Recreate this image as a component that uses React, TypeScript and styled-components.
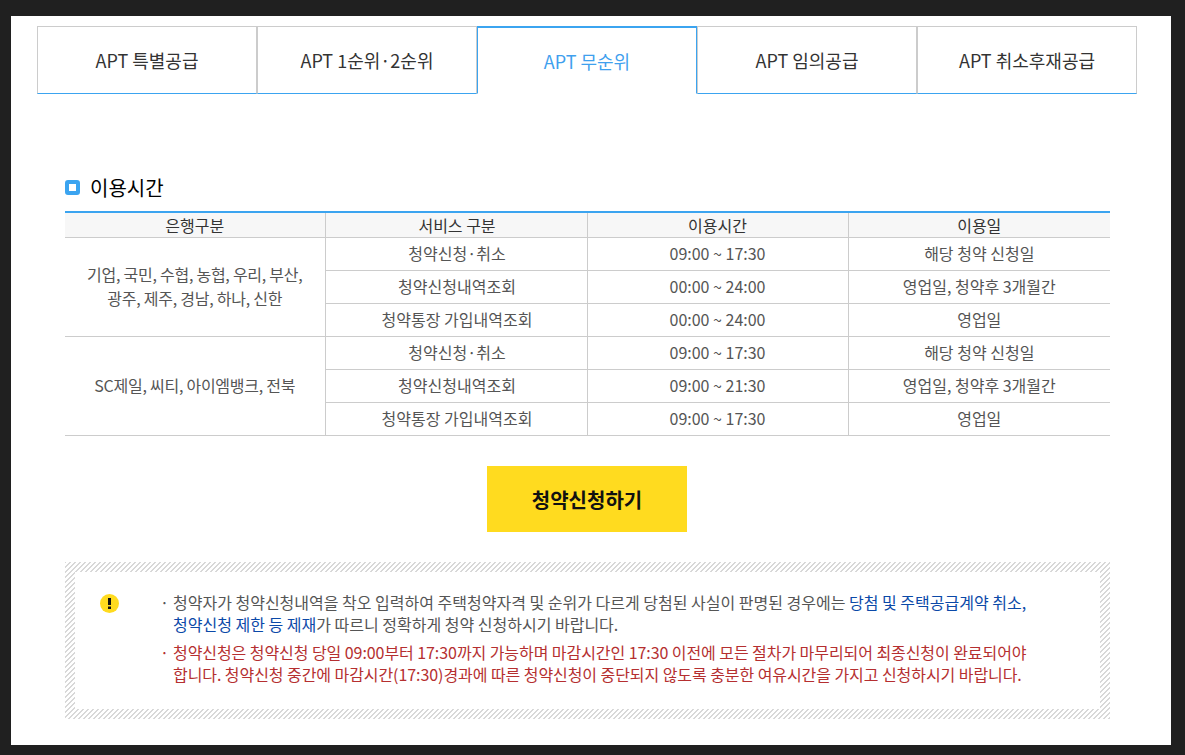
import React from "react";
import styled, { createGlobalStyle } from "styled-components";

const GlobalStyle = createGlobalStyle`
  html, body {
    margin: 0;
    padding: 0;
    background: #202020;
  }
  body {
    font-family: "Noto Sans CJK KR", "Noto Sans", sans-serif;
    color: #333;
  }
`;

const Frame = styled.div`
  width: 1185px;
  height: 755px;
  box-sizing: border-box;
  padding: 16px 14px 10px 11px;
  overflow: hidden;
`;

const Panel = styled.main`
  height: 100%;
  box-sizing: border-box;
  background: #fff;
  padding: 10px 34px 0 26px;
`;

const Tabs = styled.ul`
  display: flex;
  list-style: none;
  margin: 0;
  padding: 0;
`;

const Tab = styled.li<{ $active?: boolean }>`
  width: 220px;
  height: 68px;
  box-sizing: border-box;
  display: flex;
  align-items: center;
  justify-content: center;
  font-size: 18px;
  background: #fff;
  color: ${(p) => (p.$active ? "#3fa0ee" : "#333")};
  border: 1px solid #ccc;
  border-left-color: ${(p) => (p.$active ? "#3ba4f0" : "#ccc")};
  border-right-color: ${(p) => (p.$active ? "#3ba4f0" : "#ccc")};
  border-top: ${(p) => (p.$active ? "2px solid #3ba4f0" : "1px solid #ccc")};
  border-bottom: ${(p) => (p.$active ? "1px solid #fff" : "1px solid #3ba4f0")};
`;

const Content = styled.section`
  padding: 80px 27px 0 28px;
`;

const TitleRow = styled.h2`
  display: flex;
  align-items: center;
  gap: 10px;
  margin: 0 0 11px;
  height: 26px;
  font-size: 20px;
  font-weight: 400;
  color: #000;
`;

const TitleMark = styled.span`
  width: 15px;
  height: 15px;
  box-sizing: border-box;
  border: 4px solid #3ba4f0;
  border-radius: 3px;
  background: #fff;
`;

const Table = styled.table`
  width: 1045px;
  border-collapse: collapse;
  table-layout: fixed;
  border-top: 2px solid #3ba4f0;
  font-size: 16px;
`;

const HeadCell = styled.th`
  height: 24px;
  padding: 0;
  font-size: 16px;
  font-weight: 400;
  color: #333;
  background: #f7f7f7;
  border-bottom: 1px solid #ccc;
  border-left: 1px solid #ccc;
  &:first-child {
    border-left: 0;
  }
  &:nth-last-child(3) {
    padding-left: 2px;
  }
`;

const Cell = styled.td`
  height: 30px;
  padding: 0 0 2px;
  text-align: center;
  line-height: 24px;
  color: #555;
  border-bottom: 1px solid #ccc;
  border-left: 1px solid #ccc;
  &:nth-last-child(3) {
    padding-left: 2px;
  }
`;

const BankCell = styled(Cell)`
  border-left: 0;
  letter-spacing: -0.25px;
`;

const ApplyButton = styled.button`
  display: block;
  width: 200px;
  height: 66px;
  margin: 30px 0 30px 422px;
  border: 0;
  padding: 0;
  background: #ffdb1f;
  color: #111;
  font-family: inherit;
  font-size: 20px;
  font-weight: 700;
`;

const Notice = styled.aside`
  display: flex;
  width: 1045px;
  height: 157px;
  box-sizing: border-box;
  padding: 10px;
  background: repeating-linear-gradient(
    135deg,
    #d8d8d8 0,
    #d8d8d8 1px,
    #fff 1px,
    #fff 3.5355px
  );
`;

const NoticeInner = styled.div`
  flex: 1;
  display: flex;
  background: #fff;
  padding: 19px 25px 0 25px;
`;

const WarnIcon = styled.svg`
  flex: none;
  width: 19px;
  height: 19px;
  margin-top: 3px;
  margin-right: 43px;
`;

const NoticeList = styled.ul`
  list-style: none;
  margin: 0;
  padding: 0;
  font-size: 16px;
  line-height: 22px;
  white-space: nowrap;
`;

const NoticeItem = styled.li<{ $red?: boolean }>`
  position: relative;
  padding-left: 11px;
  margin-bottom: 6px;
  color: ${(p) => (p.$red ? "#b52f30" : "#555")};
  letter-spacing: ${(p) => (p.$red ? "-0.065px" : "0")};
  &::before {
    content: "·";
    position: absolute;
    left: -2px;
    top: 0;
  }
`;

const Strong = styled.span`
  color: #0b49a8;
`;

const rows = [
  ["청약신청·취소", "09:00 ~ 17:30", "해당 청약 신청일"],
  ["청약신청내역조회", "00:00 ~ 24:00", "영업일, 청약후 3개월간"],
  ["청약통장 가입내역조회", "00:00 ~ 24:00", "영업일"],
  ["청약신청·취소", "09:00 ~ 17:30", "해당 청약 신청일"],
  ["청약신청내역조회", "09:00 ~ 21:30", "영업일, 청약후 3개월간"],
  ["청약통장 가입내역조회", "09:00 ~ 17:30", "영업일"],
];

const tabs = ["APT 특별공급", "APT 1순위·2순위", "APT 무순위", "APT 임의공급", "APT 취소후재공급"];

const App = () => {
  return (
    <Frame>
      <GlobalStyle />
      <Panel>
        <Tabs>
          {tabs.map((t, i) => (
            <Tab key={t} $active={i === 2}>
              {t}
            </Tab>
          ))}
        </Tabs>
        <Content>
          <TitleRow>
            <TitleMark />
            이용시간
          </TitleRow>
          <Table>
            <colgroup>
              <col style={{ width: 260 }} />
              <col style={{ width: 262 }} />
              <col style={{ width: 261 }} />
              <col style={{ width: 262 }} />
            </colgroup>
            <thead>
              <tr>
                <HeadCell>은행구분</HeadCell>
                <HeadCell>서비스 구분</HeadCell>
                <HeadCell>이용시간</HeadCell>
                <HeadCell>이용일</HeadCell>
              </tr>
            </thead>
            <tbody>
              {rows.map((r, i) => (
                <tr key={i}>
                  {i === 0 && (
                    <BankCell rowSpan={3}>
                      기업, 국민, 수협, 농협, 우리, 부산,
                      <br />
                      광주, 제주, 경남, 하나, 신한
                    </BankCell>
                  )}
                  {i === 3 && <BankCell rowSpan={3}>SC제일, 씨티, 아이엠뱅크, 전북</BankCell>}
                  {r.map((c, j) => (
                    <Cell key={j}>{c}</Cell>
                  ))}
                </tr>
              ))}
            </tbody>
          </Table>
          <ApplyButton>청약신청하기</ApplyButton>
          <Notice>
            <NoticeInner>
              <WarnIcon viewBox="0 0 19 19">
                <circle cx="9.5" cy="9.5" r="9.5" fill="#ffdb1f" />
                <rect x="8" y="4" width="3" height="7" fill="#111" />
                <rect x="8" y="12.5" width="3" height="2.5" fill="#111" />
              </WarnIcon>
              <NoticeList>
                <NoticeItem>
                  청약자가 청약신청내역을 착오 입력하여 주택청약자격 및 순위가 다르게 당첨된 사실이 판명된 경우에는{" "}
                  <Strong>당첨 및 주택공급계약 취소,</Strong>
                  <br />
                  <Strong>청약신청 제한 등 제재</Strong>가 따르니 정확하게 청약 신청하시기 바랍니다.
                </NoticeItem>
                <NoticeItem $red>
                  청약신청은 청약신청 당일 09:00부터 17:30까지 가능하며 마감시간인 17:30 이전에 모든 절차가 마무리되어 최종신청이 완료되어야
                  <br />
                  합니다. 청약신청 중간에 마감시간(17:30)경과에 따른 청약신청이 중단되지 않도록 충분한 여유시간을 가지고 신청하시기 바랍니다.
                </NoticeItem>
              </NoticeList>
            </NoticeInner>
          </Notice>
        </Content>
      </Panel>
    </Frame>
  );
};

export default App;
